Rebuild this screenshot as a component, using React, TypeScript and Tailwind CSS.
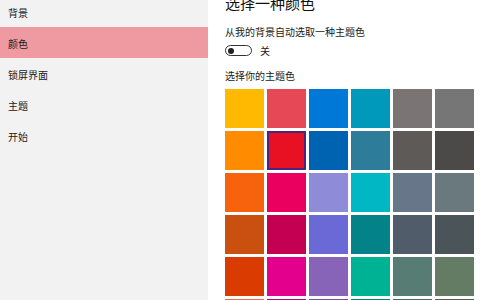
import React from "react";

const cols: string[][] = [
  ["#FFB900", "#FF8C00", "#F7630C", "#CA5010", "#DA3B01", "#EF6950"],
  ["#E74856", "#E81123", "#EA005E", "#C30052", "#E3008C", "#BF0077"],
  ["#0078D7", "#0063B1", "#8E8CD8", "#6B69D6", "#8764B8", "#744DA9"],
  ["#0099BC", "#2D7D9A", "#00B7C3", "#038387", "#00B294", "#018574"],
  ["#7A7574", "#5D5A58", "#68768A", "#515C6B", "#567C73", "#486860"],
  ["#767676", "#4C4A48", "#69797E", "#4A5459", "#647C64", "#525E54"],
];

const rows = [0, 1, 2, 3, 4, 5];

const navItems = ["背景", "颜色", "锁屏界面", "主题", "开始"];

export default function App() {
  return (
    <div
      className="flex w-[487px] h-[300px] overflow-hidden bg-white text-[#1a1a1a]"
      style={{ fontFamily: '"Noto Sans CJK SC", "Noto Sans", sans-serif' }}
    >
      <div className="w-[208px] shrink-0 bg-[#f2f2f2] flex flex-col">
        <div className="mt-[-4px] flex flex-col">
          {navItems.map((t, i) => (
            <div
              key={t}
              className={
                i === 1
                  ? "h-[31px] flex items-center pl-[8px] pt-[2px] text-[10px] leading-[14px] bg-[#ef9aa0]"
                  : "h-[31px] flex items-center pl-[8px] pt-[2px] text-[10px] leading-[14px]"
              }
            >
              {t}
            </div>
          ))}
        </div>
      </div>
      <div className="flex-1 flex flex-col pl-[17px]">
        <div className="mt-[-7px] text-[15px] leading-[20px] text-[#111]">选择一种颜色</div>
        <div className="mt-[12px] text-[10px] leading-[14px]">从我的背景自动选取一种主题色</div>
        <div className="mt-[6px] flex items-center h-[11px]">
          <div className="w-[27px] h-[11px] rounded-full border-[1.5px] border-[#333] flex items-center">
            <div className="ml-[2px] w-[6px] h-[6px] rounded-full bg-[#222]" />
          </div>
          <span className="ml-[8px] text-[10px] leading-[14px]">关</span>
        </div>
        <div className="mt-[13px] text-[10px] leading-[14px]">选择你的主题色</div>
        <div className="mt-[6px] grid grid-cols-[repeat(6,39px)] gap-[3px]">
          {rows.map((r) =>
            cols.map((c, ci) => {
              const selected = r === 1 && ci === 1;
              return (
                <div
                  key={`${r}-${ci}`}
                  className={
                    selected
                      ? "w-[39px] h-[39px] border-2 border-[#4b2380]"
                      : "w-[39px] h-[39px]"
                  }
                  style={{ backgroundColor: c[r] }}
                />
              );
            })
          )}
        </div>
      </div>
    </div>
  );
}
